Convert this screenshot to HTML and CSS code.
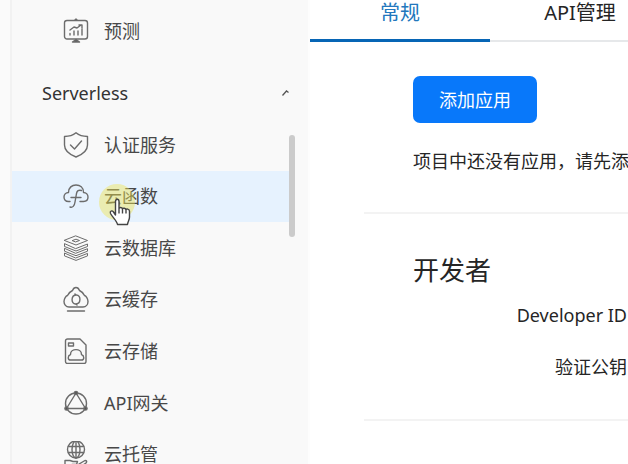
FILE: index.html
```html
<!DOCTYPE html>
<html lang="zh-CN">
<head>
<meta charset="utf-8">
<meta name="viewport" content="width=device-width, initial-scale=1">
<title>项目设置</title>
<link rel="stylesheet" href="styles.css">
</head>
<body>
<div class="app">
  <aside class="sidebar">
    <nav class="nav">
      <a class="item item-first" href="#">
        <svg class="icon" viewBox="0 0 26 26"><rect x="1.500" y="2.500" width="23" height="18.500" rx="2.500"/><path d="M7 17v-1.500M11 17v-4M15 17v-4M19 17v-6M7 12l4-3 3 1 4-3M16 7h3v3"/><path class="solid" d="M12 2l1-1 1 1zM9.500 24l3.500-2.500 3.500 2.500z"/></svg>
        <span>预测</span>
      </a>
      <button class="group" type="button" aria-expanded="true">
        <span>Serverless</span>
        <svg class="chevron" viewBox="0 0 10 8"><path d="M1.500 6.500l4-4.500 2 1.500" /></svg>
      </button>
      <div class="list">
        <a class="item" href="#">
          <svg class="icon" viewBox="0 0 26 26"><path d="M13 .8c3 2.500 7 3.700 11.500 3.700v8.500c0 5.500-5 9.500-11.500 12C6.500 22.500 1.500 18.500 1.500 13V4.500C6 4.500 10 3.300 13 .8zM7.500 13l4 4 7-8"/></svg>
          <span>认证服务</span>
        </a>
        <a class="item active" href="#" aria-current="page">
          <svg class="icon" viewBox="0 0 26 26"><path d="M7 18.500H5.500C2.500 18.500 1 16.500 1 14s2-4.500 4.500-4.500C5.500 4.500 9 2 13 2s7.500 2.500 7.500 7.500C23 9.500 25 11.500 25 14s-1.500 4.500-4.500 4.500H17M18.500 7.500c-3-1-4.500.5-5 3l-1.500 8.500c-.5 4-2.500 6-5 5M8 14.500h10"/></svg>
          <span>云函数</span>
        </a>
        <a class="item" href="#">
          <svg class="icon thin" viewBox="0 0 26 26"><path d="M13 1l11.500 4.500L13 10 1.500 5.500zM9.500 5.500l3.500-1.300 3.500 1.300-3.500 1.300zM1.500 9v2.500L13 16l11.500-4.500V9L13 13.500zM1.500 13.700v2.500L13 20.700l11.500-4.500v-2.500L13 18.200zM1.500 18.400v2.500L13 25.400l11.500-4.500v-2.500L13 22.900z"/></svg>
          <span>云数据库</span>
        </a>
        <a class="item" href="#">
          <svg class="icon" viewBox="0 0 26 26"><path d="M6 21c-3 0-5-2.500-5-5.500S3 10 4.500 9.500C5.500 7 7.500 5.500 9.500 4.500c1.500-4 5.500-4 7 0 2 1 4 2.500 5 5C23 10 25 12.500 25 15.500S23 21 20 21zM4.500 25h17"/><path d="M13.500 9c-6 0-5.500 9-1 9M12.500 18c6 0 5.500-9 1-9l-1.500-1M12.500 18l1.500 1"/></svg>
          <span>云缓存</span>
        </a>
        <a class="item" href="#">
          <svg class="icon" viewBox="0 0 26 26"><path d="M4.500 1H17l6 6v16.500a2 2 0 0 1-2 2H4.500a2 2 0 0 1-2-2V3a2 2 0 0 1 2-2zM5.500 5h5v3h-5zM7.500 22c-3 0-3-4.500 0-5.500 0-6.500 11-6.500 11 0 3 1 3 5.500 0 5.500z"/></svg>
          <span>云存储</span>
        </a>
        <a class="item" href="#">
          <svg class="icon" viewBox="0 0 26 26"><circle cx="13" cy="13.500" r="10.500"/><path d="M13 3L3.500 18.500h19z"/><g class="solid"><circle cx="13" cy="3" r="1.600"/><circle cx="3.500" cy="18.500" r="1.600"/><circle cx="22.500" cy="18.500" r="1.600"/></g></svg>
          <span>API网关</span>
        </a>
        <a class="item" href="#">
          <svg class="icon" viewBox="0 0 26 26"><circle cx="13" cy="8.500" r="8.500"/><ellipse cx="13" cy="8.500" rx="4" ry="8.500"/><path d="M13 0v17M5.500 5.500h15M5.500 11.500h15M2 25.500v-6h5l3 1h4.500l-1 3H9M16 23l6-3.500c2 0 2 1 1 2.500l-5 3.500"/></svg>
          <span>云托管</span>
        </a>
        <span class="thumb"></span>
        <span class="pointer">
          <svg viewBox="0 0 24 28"><path d="M7.500 17V3.500c0-3 3.500-3 3.500 0V11c0-2 3.500-2 3.500.5 0-2 3.500-1.500 3.500.7 0-2 3.500-1.200 3.500 1V19c0 3-1.500 4-2 7.500H9.500C9 23 5 20 2.500 15.500c-1-2.500 1.500-3.500 3-1.500zM11 11v4.500M14.500 11.500v4M18 12.500v3"/></svg>
        </span>
      </div>
    </nav>
  </aside>
  <main class="main">
    <div class="tabs" role="tablist">
      <button class="tab selected" type="button" role="tab" aria-selected="true">常规</button>
      <button class="tab" type="button" role="tab" aria-selected="false">API管理</button>
    </div>
    <section class="panel apps">
      <button class="primary" type="button">添加应用</button>
      <p class="hint">项目中还没有应用，请先添</p>
    </section>
    <section class="panel developer">
      <h2 class="title">开发者</h2>
      <dl class="fields">
        <dt>Developer ID</dt>
        <dt>验证公钥</dt>
      </dl>
    </section>
  </main>
</div>
</body>
</html>
```
FILE: styles.css
```css
* {
  box-sizing: border-box;
}

body {
  margin: 0;
  background: #fff;
  color: #252525;
  font: 18px/24px "Noto Sans", "Noto Sans CJK SC", sans-serif;
}

button {
  margin: 0;
  padding: 0;
  border: 0;
  background: none;
  color: inherit;
  font: inherit;
}

.app {
  display: grid;
  grid-template-columns: 310px minmax(0, 1fr);
  height: 100vh;
  overflow: hidden;
}

.sidebar {
  padding-left: 10px;
  background: #fafafa;
  border-right: 2px solid #fdfdfd;
}

.nav {
  border-left: 2px solid #f2f2f2;
  background: #f9f9f9;
}

.item {
  display: flex;
  align-items: center;
  gap: 15px;
  padding-left: 51px;
  color: #484848;
  text-decoration: none;
}

.item-first {
  height: 62px;
}

.icon {
  width: 26px;
  height: 26px;
  fill: none;
  stroke: #6c6c6c;
  stroke-width: 1.4;
  stroke-linecap: round;
  stroke-linejoin: round;
}

.thin {
  stroke-width: 1;
}

.solid {
  fill: #555;
}

.group {
  display: flex;
  align-items: center;
  justify-content: space-between;
  width: 100%;
  height: 57px;
  padding: 4px 17px 0 30px;
  color: #333;
}

.chevron {
  width: 10px;
  height: 8px;
  fill: none;
  stroke: #555;
  stroke-width: 1.3;
}

.list {
  position: relative;
  display: grid;
  grid-auto-rows: 1fr;
  height: 361px;
}

.active {
  margin-right: 16px;
  background: #e6f2fe;
}

.thumb {
  position: absolute;
  top: 16px;
  right: 13px;
  width: 6px;
  height: 102px;
  border-radius: 3px;
  background: #cbcbcb;
}

.pointer {
  position: absolute;
  top: 65px;
  left: 87px;
  width: 36px;
  height: 36px;
  border-radius: 50%;
  background: rgba(239, 228, 85, 0.45);
}

.pointer svg {
  position: absolute;
  top: 14px;
  left: 9px;
  width: 24px;
  height: 28px;
  fill: #fff;
  stroke: #444;
  stroke-width: 1.4;
  stroke-linejoin: round;
}

.tabs {
  display: flex;
  height: 42px;
  border-bottom: 2px solid #e6e8ea;
}

.tab {
  flex: 0 0 180px;
  height: 42px;
  padding-bottom: 14px;
  border-bottom: 3px solid transparent;
  font-size: 20px;
}

.selected {
  border-color: #0765b5;
  color: #2277bd;
}

.panel {
  margin-left: 54px;
  padding-left: 49px;
  border-bottom: 2px solid #f3f3f3;
}

.apps {
  padding-top: 34px;
  padding-bottom: 39px;
}

.primary {
  width: 124px;
  height: 47px;
  border-radius: 7px;
  background: #0878fa;
  color: #fff;
}

.hint {
  margin: 26px 0 0;
  white-space: nowrap;
}

.developer {
  padding-top: 38px;
  padding-bottom: 40px;
}

.title {
  margin: 0;
  font-size: 26px;
  font-weight: 400;
  line-height: 36px;
}

.fields {
  display: grid;
  gap: 28px;
  margin: 15px 0 0;
  padding-right: 1px;
  text-align: right;
}
```
